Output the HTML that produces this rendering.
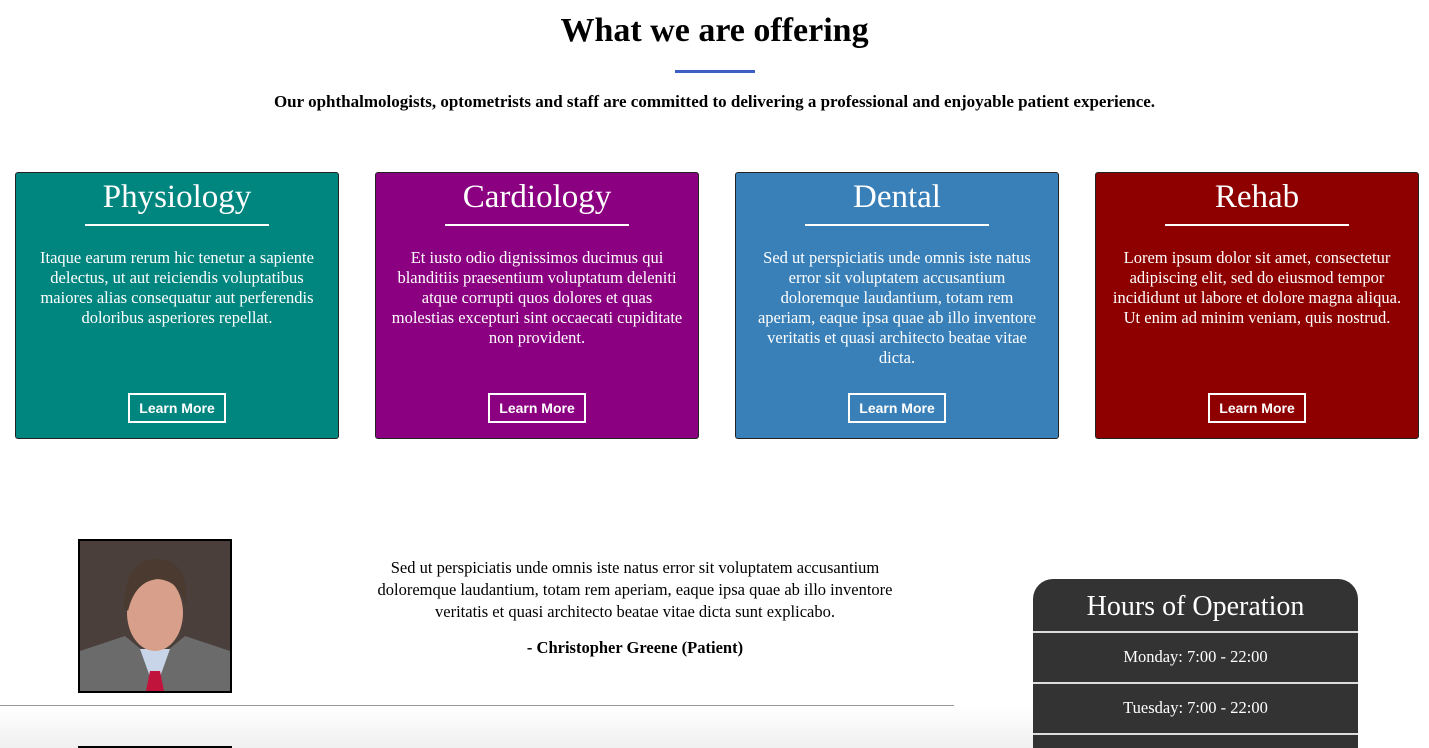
<!DOCTYPE html>
<html><head><meta charset="utf-8"><style>
html,body{margin:0;width:1429px;height:748px;overflow:hidden}
body{background:#fff;font-family:"Liberation Serif",serif;position:relative}
h1{position:absolute;top:12px;left:0;width:1429px;text-align:center;margin:0;font-size:34px;font-weight:bold}
.bl{position:absolute;left:675px;top:70px;width:80px;height:3px;background:#3c5fc4}
.sub{position:absolute;top:92px;left:0;width:1429px;text-align:center;font-weight:bold;font-size:17px}
.card{position:absolute;top:172px;width:322px;height:265px;border:1px solid #222;border-radius:3px;color:#fff;text-align:center}
.card h2{margin:6px 0 0;font-weight:normal;font-size:33px;line-height:36px}
.card .u{width:184px;height:2px;background:#fff;margin:9px auto 22px}
.card p{margin:0 15px;font-size:16.5px;line-height:20px}
.btn{position:absolute;left:112px;top:220px;width:94px;height:26px;border:2px solid #fff;font:bold 14px "Liberation Sans",sans-serif;line-height:26px}
.q{position:absolute;left:350px;width:570px;text-align:center;font-size:16.5px;line-height:22px;top:557px}
.hours{position:absolute;left:1033px;top:579px;width:325px;height:169px;overflow:hidden;background:#333;border-radius:20px 20px 0 0;color:#fff;text-align:center}
.hours .t{font-size:28px;height:52px;line-height:56px}
.hours .r{border-top:2px solid #ddd;height:49px;line-height:48px;font-size:16.5px}
</style></head><body>
<h1>What we are offering</h1>
<div class="bl"></div>
<div class="sub">Our ophthalmologists, optometrists and staff are committed to delivering a professional and enjoyable patient experience.</div>

<div class="card" style="left:15px;background:#00857f"><h2>Physiology</h2><div class="u"></div><p>Itaque earum rerum hic tenetur a sapiente delectus, ut aut reiciendis voluptatibus maiores alias consequatur aut perferendis doloribus asperiores repellat.</p><div class="btn">Learn More</div></div>
<div class="card" style="left:375px;background:#8b0080"><h2>Cardiology</h2><div class="u"></div><p>Et iusto odio dignissimos ducimus qui blanditiis praesentium voluptatum deleniti atque corrupti quos dolores et quas molestias excepturi sint occaecati cupiditate non provident.</p><div class="btn">Learn More</div></div>
<div class="card" style="left:735px;background:#3a80b8"><h2>Dental</h2><div class="u"></div><p>Sed ut perspiciatis unde omnis iste natus error sit voluptatem accusantium doloremque laudantium, totam rem aperiam, eaque ipsa quae ab illo inventore veritatis et quasi architecto beatae vitae dicta.</p><div class="btn">Learn More</div></div>
<div class="card" style="left:1095px;background:#8e0000"><h2>Rehab</h2><div class="u"></div><p>Lorem ipsum dolor sit amet, consectetur adipiscing elit, sed do eiusmod tempor incididunt ut labore et dolore magna aliqua. Ut enim ad minim veniam, quis nostrud.</p><div class="btn">Learn More</div></div>

<div style="position:absolute;left:78px;top:539px;width:150px;height:150px;border:2px solid #000;overflow:hidden;background:#4a3f3a">
<svg width="150" height="150" viewBox="0 0 150 150">
<path d="M0 110 L45 95 L75 120 L105 95 L150 110 L150 150 L0 150Z" fill="#6b6b6b"/>
<path d="M60 108 L75 150 L90 108 Z" fill="#c8d4e8"/>
<path d="M70 130 L80 130 L84 150 L66 150Z" fill="#c0143c"/>
<ellipse cx="75" cy="72" rx="28" ry="38" fill="#d8a08a"/>
<path d="M44 65 Q45 18 78 18 Q110 20 106 65 Q100 40 78 38 Q55 40 48 70Z" fill="#4a3a30"/>
</svg></div>
<div class="q">Sed ut perspiciatis unde omnis iste natus error sit voluptatem accusantium doloremque laudantium, totam rem aperiam, eaque ipsa quae ab illo inventore veritatis et quasi architecto beatae vitae dicta sunt explicabo.<div style="font-weight:bold;margin-top:14px">- Christopher Greene (Patient)</div></div>
<div style="position:absolute;left:0;top:705px;width:954px;height:1px;background:#999"></div>
<div style="position:absolute;left:0;top:706px;width:1100px;height:42px;background:linear-gradient(#fff,#f0f0f0)"></div>
<div style="position:absolute;left:78px;top:746px;width:154px;height:2px;background:#000"></div>
<div class="hours"><div class="t">Hours of Operation</div><div class="r">Monday: 7:00 - 22:00</div><div class="r">Tuesday: 7:00 - 22:00</div><div class="r"></div></div>
</body></html>
